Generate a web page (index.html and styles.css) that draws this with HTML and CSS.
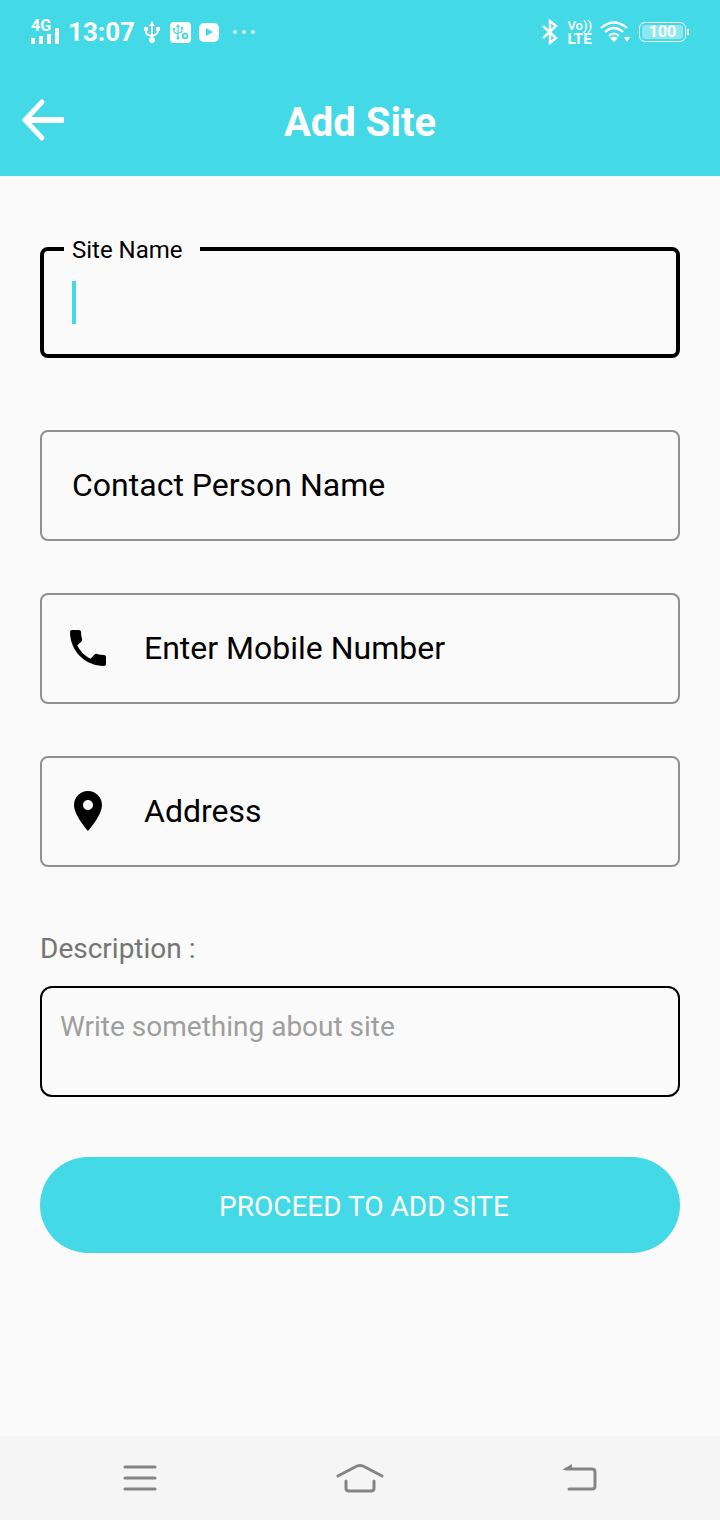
FILE: index.html
```html
<!DOCTYPE html>
<html lang="en">
<head>
    <meta charset="UTF-8">
    <meta name="viewport" content="width=device-width, initial-scale=1.0">
    <title>Add Site</title>
    <link rel="stylesheet" href="styles.css">
</head>
<body>
    <header class="header">
        <div class="status-bar">
            <div class="status-group">
                <div class="signal">
                    <span class="signal-type">4G</span>
                    <svg width="29" height="16" viewBox="0 0 29 16" fill="currentColor">
                        <path d="M0 10h4v6H0zM8 8h4v8H8zM16 6h4v10h-4zM24 0h4v16h-4z"/>
                    </svg>
                </div>
                <span class="time">13:07</span>
                <svg class="usb" width="18" height="22" viewBox="0 0 18 22" fill="none" stroke="currentColor" stroke-width="2">
                    <path d="M9 3v16M3 7v4q0 3 6 4M15 7v3q0 3-6 5"/>
                    <path d="M9 0l3 5H6zM1 6h4v4H1zM13 6h4v4h-4z" fill="currentColor" stroke="none"/>
                    <circle cx="9" cy="19" r="3" fill="currentColor" stroke="none"/>
                </svg>
                <svg class="usb-debug" width="22" height="22" viewBox="0 0 22 22">
                    <rect width="21" height="21" x="1" y="1" rx="4" fill="currentColor"/>
                    <g fill="none" stroke="#43d9e7" stroke-width="1.2">
                        <path d="M9 5v12M5 8v2q0 2 4 3M13 7v2q0 3-4 3"/>
                        <circle cx="16" cy="15" r="2.3" stroke-width="1.8"/>
                    </g>
                    <path d="M9 3l2 3H7zM4 7h2v2H4zM12 6h2v2h-2z" fill="#43d9e7"/>
                    <circle cx="9" cy="17" r="1.5" fill="#43d9e7"/>
                </svg>
                <svg class="player" width="20" height="20" viewBox="0 0 20 20">
                    <rect width="20" height="19" y="1" rx="5" fill="currentColor"/>
                    <path d="M7 6l7 4-7 4z" fill="#43d9e7"/>
                </svg>
                <svg class="more" width="22" height="4" viewBox="0 0 22 4" fill="currentColor" opacity=".8">
                    <circle cx="2" cy="2" r="2"/><circle cx="11" cy="2" r="2"/><circle cx="20" cy="2" r="2"/>
                </svg>
            </div>
            <div class="status-group">
                <svg width="18" height="26" viewBox="0 0 18 26" fill="none" stroke="currentColor" stroke-width="2.4">
                    <path d="M2 7l13 12-6 5V2l6 5L2 19"/>
                </svg>
                <div class="volte">
                    <span class="vo">Vo))</span>
                    <span class="lte">LTE</span>
                </div>
                <svg class="wifi" width="31" height="22" viewBox="0 0 31 22" fill="none" stroke="currentColor" stroke-width="2.2">
                    <path d="M1 7q13-11 26 0M5 11q9-8 18 0M9 15q5-5 10 0"/>
                    <path d="M10 17q4-3 8 0l-4 4zM24 16h6l-3 5z" fill="currentColor" stroke="none"/>
                </svg>
                <div class="battery"><span class="battery-level">100</span></div>
            </div>
        </div>
        <div class="app-bar">
            <button type="button" class="back-button" aria-label="Back">
                <svg width="44" height="44" viewBox="0 0 44 44" fill="none" stroke="currentColor" stroke-width="6">
                    <path d="M5 22h39"/>
                    <path d="M22 4L5 22l17 18" stroke-width="5" stroke-linecap="round"/>
                </svg>
            </button>
            <h1>Add Site</h1>
        </div>
    </header>

    <main>
        <form id="siteForm">
            <div class="field field-active">
                <label for="siteName">Site Name</label>
                <span class="caret"></span>
                <input type="text" id="siteName" name="siteName">
            </div>

            <div class="field">
                <input type="text" id="contact" name="contact" placeholder="Contact Person Name" aria-label="Contact Person Name">
            </div>

            <div class="field">
                <svg class="field-icon" width="48" height="48" viewBox="0 0 24 24">
                    <path d="M6.62 10.79c1.44 2.83 3.76 5.14 6.59 6.59l2.2-2.2c.27-.27.67-.36 1.02-.24 1.12.37 2.33.57 3.57.57.55 0 1 .45 1 1V20c0 .55-.45 1-1 1-9.39 0-17-7.61-17-17 0-.55.45-1 1-1h3.5c.55 0 1 .45 1 1 0 1.25.2 2.45.57 3.57.11.35.03.74-.25 1.02l-2.2 2.2z"/>
                </svg>
                <input type="tel" id="mobile" name="mobile" placeholder="Enter Mobile Number" aria-label="Mobile Number">
            </div>

            <div class="field">
                <svg class="field-icon" width="48" height="48" viewBox="0 0 24 24">
                    <path d="M12 2C8.13 2 5 5.13 5 9c0 5.25 7 13 7 13s7-7.75 7-13c0-3.87-3.13-7-7-7zm0 9.5c-1.38 0-2.5-1.12-2.5-2.5s1.12-2.5 2.5-2.5 2.5 1.12 2.5 2.5-1.12 2.5-2.5 2.5z"/>
                </svg>
                <input type="text" id="address" name="address" placeholder="Address" aria-label="Address">
            </div>

            <label class="description-label" for="description">Description :</label>
            <textarea id="description" name="description" placeholder="Write something about site"></textarea>

            <button type="submit" class="submit-button">PROCEED TO ADD SITE</button>
        </form>
    </main>

    <nav class="nav-bar">
        <button type="button" aria-label="Recent apps">
            <svg width="34" height="28" viewBox="0 0 34 28">
                <path d="M2 3h30M2 14h30M2 25h30"/>
            </svg>
        </button>
        <button type="button" aria-label="Home">
            <svg width="48" height="30" viewBox="0 0 48 30">
                <path d="M2 13L19 4q5-3 10 0l17 9M10 18v7q0 3 3 3h22q3 0 3-3v-7"/>
            </svg>
        </button>
        <button type="button" aria-label="Back">
            <svg width="36" height="28" viewBox="0 0 36 28">
                <path d="M4 5h26q3 0 3 3v14q0 3-3 3H7"/>
                <path d="M0 6l10-6v6z" class="nav-arrow"/>
            </svg>
        </button>
    </nav>
</body>
</html>
```

FILE: styles.css
```css
* {
    box-sizing: border-box;
}

body {
    font-family: Roboto, sans-serif;
    background: #fafafa;
    margin: 0;
    min-height: 100vh;
    display: flex;
    flex-direction: column;
    color: #000;
}

button {
    font-family: inherit;
    border: none;
    padding: 0;
    background: none;
    cursor: pointer;
}

svg {
    display: block;
    flex-shrink: 0;
}

.header {
    background: #43d9e7;
    color: #fff;
}

/* Status bar */
.status-bar {
    display: flex;
    justify-content: space-between;
    height: 64px;
    padding: 0 34px 0 31px;
}

.status-group {
    display: flex;
    align-items: center;
    gap: 8px;
}

.signal {
    display: flex;
    flex-direction: column;
}

.signal-type {
    font-size: 16px;
    font-weight: bold;
    line-height: 12px;
    margin-bottom: -4px;
}

.time {
    font-size: 26px;
    font-weight: bold;
}

.more {
    margin-left: 6px;
}

.volte {
    display: flex;
    flex-direction: column;
    font-weight: bold;
}

.vo {
    font-size: 13px;
    font-weight: 500;
    line-height: 13px;
}

.lte {
    font-size: 15px;
    line-height: 14px;
}

.battery {
    position: relative;
    width: 47px;
    height: 20px;
    padding: 2px;
    border: 1px solid #fff;
    border-radius: 6px;
}

.battery::after {
    content: "";
    position: absolute;
    top: 6px;
    right: -4px;
    width: 2px;
    height: 6px;
    background: #fff;
}

.battery-level {
    display: block;
    border-radius: 3px;
    background: rgba(255, 255, 255, 0.4);
    font-size: 16px;
    font-weight: bold;
    line-height: 14px;
    text-align: center;
}

/* App bar */
.app-bar {
    display: grid;
    grid-template-columns: 1fr auto 1fr;
    align-items: center;
    height: 112px;
    padding: 0 20px;
}

.back-button {
    justify-self: start;
    color: #fff;
}

h1 {
    margin: 4px 0 0;
    font-size: 40px;
    font-weight: bold;
}

/* Form */
main {
    flex: 1;
    padding: 71px 40px 40px;
}

.field {
    position: relative;
    display: flex;
    align-items: center;
    height: 111px;
    margin-bottom: 52px;
    padding: 0 30px 2px;
    border: 2px solid #909090;
    border-radius: 8px;
}

.field-active {
    margin-bottom: 72px;
    padding: 0 28px;
    border: 4px solid #000;
}

.field-active label {
    position: absolute;
    top: -15px;
    left: 20px;
    min-width: 136px;
    padding: 0 8px;
    background: #fafafa;
    font-size: 24px;
    line-height: 28px;
}

.caret {
    width: 4px;
    height: 43px;
    background: #43d9e7;
}

.field input {
    flex: 1;
    min-width: 0;
    padding: 0;
    border: none;
    outline: none;
    background: none;
    font-family: inherit;
    font-size: 32px;
    caret-color: #43d9e7;
}

.field input::placeholder {
    color: #000;
    opacity: 1;
}

.field-icon {
    margin: 0 32px 0 -8px;
}

.description-label {
    display: block;
    margin: 65px 0 21px;
    color: #757575;
    font-size: 28px;
    line-height: 33px;
}

textarea {
    display: block;
    width: 100%;
    height: 111px;
    padding: 22px 18px;
    border: 2px solid #000;
    border-radius: 12px;
    outline: none;
    background: none;
    resize: none;
    font-family: inherit;
    font-size: 28px;
    line-height: 33px;
}

textarea::placeholder {
    color: #9e9e9e;
    opacity: 1;
}

.submit-button {
    width: 100%;
    height: 96px;
    margin-top: 60px;
    padding: 2px 0 0 8px;
    border-radius: 48px;
    background: #43d9e7;
    color: #fff;
    font-size: 28px;
}

/* System navigation */
.nav-bar {
    display: grid;
    grid-template-columns: repeat(3, 1fr);
    height: 84px;
    padding: 0 30px;
    background: #f5f5f5;
}

.nav-bar button {
    display: flex;
    align-items: center;
    justify-content: center;
}

.nav-bar svg {
    fill: none;
    stroke: #858585;
    stroke-width: 3;
    stroke-linecap: round;
}

.nav-bar .nav-arrow {
    fill: #858585;
    stroke: none;
}
```
